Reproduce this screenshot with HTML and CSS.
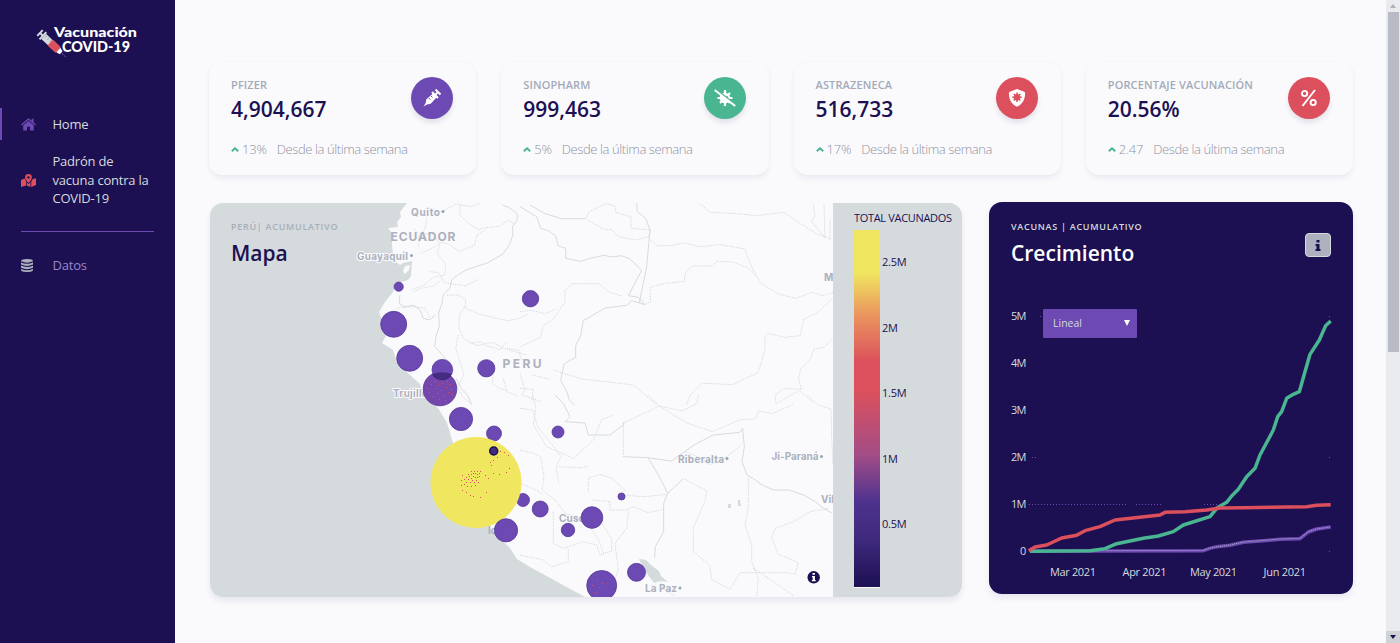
FILE: index.html
```html
<!DOCTYPE html>
<html lang="es">
<head>
<meta charset="utf-8">
<title>Vacunación COVID-19</title>
<link rel="stylesheet" href="styles.css">
</head>
<body>
<div class="app">
  <aside class="sidebar">
    <svg class="logo" width="104" height="42" viewBox="35 20 104 42">
      <g transform="translate(40 33) rotate(43)">
        <path d="M0-4v8M0 0h5M4-5v10" stroke="#d5dbdc" stroke-width="2" fill="none"/>
        <rect x="5" y="-3.500" width="10" height="7" fill="#d5dbdc"/>
        <path d="M7-3v3M10-3v3M13-3v3" stroke="#adb0bd"/>
        <rect x="14" y="-4" width="11" height="8" rx="1" fill="#db505c"/>
        <path d="M25-3l4 1v4l-4 1z" fill="#fafafd"/>
        <path d="M30 0h6" stroke="#6d49b3" stroke-dasharray="2 1"/>
      </g>
      <text x="54" y="36.500" textLength="83" lengthAdjust="spacingAndGlyphs">Vacunación</text>
      <text class="logo-big" x="62" y="51.500" textLength="68" lengthAdjust="spacingAndGlyphs">COVID-19</text>
    </svg>
    <nav class="nav">
      <a class="nav-item active">
        <svg width="15" height="13" viewBox="0 0 15 13"><path d="M0 6.400L7 .4h1l2.700 2.300V.8h1.800v3.500L15 6.400l-.8 1L7.500 1.900.8 7.400zM2.200 7.200L7.500 2.900l5.300 4.300v5.400H9V8.700H6v3.900H2.200z" fill="#6d49b3"/></svg>
        <span>Home</span>
      </a>
      <a class="nav-item tall">
        <svg width="15" height="13" viewBox="0 0 15 13"><path d="M7.500 0a3.400 3.400 0 0 1 3.400 3.400C10.900 5.300 8.500 7.600 7.500 9 6.500 7.600 4.100 5.300 4.100 3.400A3.400 3.400 0 0 1 7.500 0zM0 6l3.600-1.500L5 7v4.500L0 13zM5.700 8l1.800 2.200L9.500 8v5l-3.800-1.500zM10.300 7.500l1.500-2.600L15 4.200V11l-4.700 2z" fill="#db505c"/><circle cx="7.500" cy="3.400" r="1.200" fill="#1c1052"/></svg>
        <span>Padrón de vacuna contra la COVID-19</span>
      </a>
      <hr>
      <a class="nav-item data">
        <svg width="15" height="13" viewBox="0 0 15 13"><path d="M0 2C0 .7 2.700 0 6 0s6 .7 6 2v9c0 1.300-2.700 2-6 2s-6-.7-6-2z" fill="#adb0bd"/><path d="M0 2.800q6 3 12 0M0 6q6 3 12 0M0 9.300q6 3 12 0" fill="none" stroke="#1c1052" stroke-width="1.100"/></svg>
        <span>Datos</span>
      </a>
    </nav>
  </aside>

  <main class="main">
    <section class="stats">
      <article class="stat">
        <div class="stat-head">
          <div><h5>PFIZER</h5><strong>4,904,667</strong></div>
          <div class="badge purple"><svg width="18" height="18" viewBox="0 0 18 18"><path d="M12.500.5l5 5M15 3l-2.200 2.200M9 3l6 6" stroke="#fff" stroke-width="2" fill="none"/><path d="M10 4.500L3.200 10.500 2.600 14.200.4 17.600 4 15.400l3.700-.6 6-6.600z" fill="#fff"/><path d="M8 7l1.500 1.500M5.800 9l1.500 1.500" stroke="#6d49b3"/></svg></div>
        </div>
        <p><svg width="8" height="5" viewBox="0 0 8 5"><path d="M.8 4.200L4 1.300l3.200 2.900" fill="none" stroke="#4ab591" stroke-width="2"/></svg><span>13%</span><em>Desde la última semana</em></p>
      </article>
      <article class="stat">
        <div class="stat-head">
          <div><h5>SINOPHARM</h5><strong>999,463</strong></div>
          <div class="badge green"><svg width="22" height="18" viewBox="0 0 22 18"><g stroke="#fff" stroke-width="2.200"><path d="M11 1v16M3.500 9h15M6 4l10 10M16 4L6 14"/></g><circle cx="11" cy="9" r="5.300" fill="#fff"/><circle cx="13" cy="8" r=".9" fill="#4ab591"/><path d="M1.300 0l20.500 16" stroke="#4ab591" stroke-width="2"/><path d="M.7 1l20.500 16" stroke="#fff" stroke-width="2"/></svg></div>
        </div>
        <p><svg width="8" height="5" viewBox="0 0 8 5"><path d="M.8 4.200L4 1.300l3.200 2.900" fill="none" stroke="#4ab591" stroke-width="2"/></svg><span>5%</span><em>Desde la última semana</em></p>
      </article>
      <article class="stat">
        <div class="stat-head">
          <div><h5>ASTRAZENECA</h5><strong>516,733</strong></div>
          <div class="badge red"><svg width="18" height="18" viewBox="0 0 18 18"><path d="M9 0l7.200 2.700q1 .4.900 1.500C17 10.500 14.500 15.300 9 17.700 3.500 15.300 1 10.500.9 4.200q0-1.100.9-1.500z" fill="#fff"/><path d="M9 3.500v9.500M4.300 8.200h9.400M5.700 5l6.600 6.500M12.300 5l-6.600 6.500" stroke="#db505c" stroke-width="1.500"/><circle cx="9" cy="8.200" r="3.200" fill="#db505c"/></svg></div>
        </div>
        <p><svg width="8" height="5" viewBox="0 0 8 5"><path d="M.8 4.200L4 1.300l3.200 2.900" fill="none" stroke="#4ab591" stroke-width="2"/></svg><span>17%</span><em>Desde la última semana</em></p>
      </article>
      <article class="stat">
        <div class="stat-head">
          <div><h5>PORCENTAJE VACUNACIÓN</h5><strong>20.56%</strong></div>
          <div class="badge red"><svg width="18" height="18" viewBox="0 0 18 18"><path d="M15 1L2.500 17" stroke="#fff" stroke-width="2"/><circle cx="4.600" cy="4.500" r="2.600" fill="none" stroke="#fff" stroke-width="1.900"/><circle cx="13.200" cy="13.500" r="2.600" fill="none" stroke="#fff" stroke-width="1.900"/></svg></div>
        </div>
        <p><svg width="8" height="5" viewBox="0 0 8 5"><path d="M.8 4.200L4 1.300l3.200 2.900" fill="none" stroke="#4ab591" stroke-width="2"/></svg><span>2.47</span><em>Desde la última semana</em></p>
      </article>
    </section>

    <section class="panels">
      <article class="map-card">
        <svg class="map" width="623" height="394" viewBox="210 203 623 394">
          <path d="M210 203H407L400 212 401 217 397 222 398 227 388 228 392 233 392 246 394 260 400 265 403 263 412 261 411 276 408 280 397 283 393 292 385 302 379 312 381 318 387 325 386 336 382 343 393 350 397 362 410 375 420 384 423 395 438 408 447 423 453 443 470 490 490 528 500 538 510 548 517 559 530 567 563 585 585 597H210z" fill="#d5dbdc"/>
          <path d="M405 266l5-1-1 5-4 4-2-3z" fill="#fafafd"/>
          <path d="M639 559l7 1 5 5 8 6 2 5 7 6-8-1-6 2-9-12z" fill="#d5dbdc"/>
          <path d="M728 504h3v4h-3zM738 500h2l1 6h-3z" fill="#d5dbdc"/>
          <g class="roads" transform="translate(200 195) scale(.33333)">
            <path class="line" d="M908 30l20 8 25 20-3 20-12 15v28l-8 25-20 30-48 28-62 20-25 15-20 15-5 25-20 20-4 25-10 30 2 40-10 30-4 30 18 20 30 35 10 20M600 300l-3 25 15 10 30-4 18 14 10 25 20 5 15-15M768 550l16 30 18 20 14 30"/>
            <path d="M640 40l30 15 20-15 30 12 50-25 40 8 30-10M700 40l-20 25-4 35-20 25v30M780 30v30l25 25 30 18 25-5 40-5 25-18 20 15M640 100l20 18 35-2 25 30-8 30 25 30-3 35-35 6-30 25-35 12M660 175l35-14 30-20 25 8 28 20 45-18 8-30 22-15M690 230l25 3 20 30 30 5 30 5 40-20M640 290l30-12 30-5 25-18M590 340l45-5 40 5 15 28M740 300h35l22 14-2 25 40 18 50 12 40 8 30-6 30-14M795 335l-15 20-4 42 15 35 40 20 45-10 40 20 65 18M775 420l-8 40 15 45 10 35-20 35 15 30 25 20M810 445l32-5 18 12 40 12 18-22M880 540l-4 25 22 15 25 8M920 460l35 5 10 30M910 550l10 40 30 12"/>
          </g>
          <g class="roads" transform="translate(520 195) scale(.33333)">
            <path class="line" d="M0 35l50 30 12 35 25 8 20 15 8 30 22 7v30l45 9 25-8 45-10 25 5 28-4 25 10 35 34-40 76 30 5 20 22-40-12-15 14-65 8-20 12-45 26-8 45-15 30v35l-35 20-10 50 18 32 8 25 15 16M350 25l2 25 25 20 13 35-10 110-22 108M30 30l45 26 50 15h70"/>
            <path d="M198 70l10-20 50-25 27 8 3 20 45 12v35l58 5-5 20-40 10-50-10-20-20-28-4-48-28M392 135l20 18 48-2 30-8 50 12 60-6 75 13 15 42 14 30 18 30 50 32 55 14 50-18 30 10 35-10M378 327l14-8-2-42 45-12 58-6 4-28 22-18h60l10-14 50 2 40 15 30 25M541 28l30 24 80 4 60 6 80-10 60 40 40 25 40 13M880 30l5 30-10 20 40 48-3-100M930 75v60M937 310l-45 44-40 18-12 50-45 5-50-12-10 10v35l-10 40-12 35-35 14-40 20-90-4-38 35-10 30M937 432l-25 25-30 5-10 30-30 30-7 30 10 30-55-1-25 20 3 25 70-40 45 40M100 525l85 27 55 6 100 12 45 38 25 22M305 303l-38-12-30-25-80 0-22 20v35l-15 22-20 30-30 18-8 35-62 30M0 350l35-4 40 10 35-15M0 535l15 50-10 15 60 20M38 540l50 12M0 580l40 3-5 35"/>
          </g>
          <g class="roads" transform="translate(520 395) scale(.33333)">
            <path class="line" d="M105 0l25 25 20 40-15 15 60 4 10 36h65l40-30 3-10M310 185l70 3 75 10 20-15 50-35 55-28 80-8 8-12 5 55-7 45 15 40 25 15 20 15 35 15h45l45 15 35 20 25 20 25 14M385 190l30 50 28 55 48-45M443 295l-12 30v85l-25 45-2 35"/>
            <path d="M310 85v100M308 85l110-52 35 22 50 30 75 25 80-35 50-4 8-23 40 8 65-28M383 0l35 33 70 15 42-23 5-25M863 0l30 30 40 12 2 85 4 80M495 170l50 20 25 20 50-25 45-35M495 253l65 35-5 30-35 80v70l50 45 5 40 55 30 30-50h145l20 5 10-35-60-25-20-50 10-28 55-20 50-30 55-10M685 250v90l-10 50 20 60v50l20 50-5 60M205 290v-40l35-12 35 12 40 35-15 15 75 5 68-7M215 315l55 5v25h50l20-10 45 18 45-10M0 165l40 10 22 10 10 60-6 40 40 30 30 40 60 20 40 60 15 40M0 40l38 5 15 50 40 50 30 40-15 30 8 50M38 0l10 40-8 50 40 65 80 35 60-55 25-60 35-15M115 215l70 3 20-5M0 265l50 20 20 15M325 350l-5 50-35 45 10 80-20 50 6 28M100 350v95l30 15 60-20 40 10 10 30 35-12v-35l-30-50M0 480l70 15 25 20 50-15v-40M390 520l50 70 25 12M700 520l60 40 60 42"/>
          </g>
          <g class="labels">
            <text x="411" y="215.500" textLength="29" class="halo">Quito</text>
            <text x="390.500" y="241" textLength="65" class="country">ECUADOR</text>
            <text x="357" y="260" textLength="51" class="halo">Guayaquil</text>
            <text x="393" y="397" textLength="35" class="halo">Trujillo</text>
            <text x="502.500" y="367.500" textLength="39" class="country">PERU</text>
            <text x="559" y="522" textLength="32">Cusco</text>
            <text x="488" y="534">Ica</text>
            <text x="678" y="462.500" textLength="46">Riberalta</text>
            <text x="771.500" y="460" textLength="47">Ji-Paraná</text>
            <text x="645" y="592" textLength="32">La Paz</text>
            <text x="824" y="281">M</text>
            <text x="821" y="503">Vil</text>
          </g>
          <g fill="#8fa9ab"><circle cx="443" cy="211.500" r="1.500"/><circle cx="411.500" cy="255.500" r="1.500"/><circle cx="727" cy="458.500" r="1.500"/><circle cx="821.500" cy="456.500" r="1.500"/><circle cx="680" cy="588" r="1.500"/></g>
          <g class="bubbles">
            <circle cx="398.700" cy="286.700" r="4.600"/><circle cx="393.700" cy="324.300" r="13"/><circle cx="409.700" cy="358.300" r="13"/><circle cx="440" cy="389" r="16.800" class="big"/><circle cx="442.300" cy="369.700" r="10.300"/><circle cx="486.300" cy="368.300" r="8.600"/><circle cx="530.500" cy="298.700" r="8.200"/><circle cx="461" cy="419" r="11.600"/><circle cx="494" cy="433.500" r="7.500"/><circle cx="523" cy="500" r="6.500"/>
            <circle cx="476" cy="482.500" r="45.500" class="lima"/>
            <circle cx="493.700" cy="451" r="4" class="dark"/><circle cx="506" cy="530.300" r="11.600"/><circle cx="540.200" cy="509" r="8"/><circle cx="592" cy="517.500" r="10.800"/><circle cx="568" cy="530" r="6.700"/><circle cx="621.500" cy="496.500" r="3.500"/><circle cx="558" cy="432" r="6"/><circle cx="601.700" cy="585.500" r="15"/><circle cx="636.500" cy="572.300" r="9"/>
          </g>
          <path d="M432 374.200q10-4 20 0-3 5.800-10 5.800t-10-5.800z" fill="#1c1052" opacity=".5"/>
          <g fill="#db505c"><path d="M471 471h1v1h-1zM474 471h1v1h-1zM477 471h1v1h-1zM480 471h1v1h-1zM468 474h1v1h-1zM471 474h1v1h-1zM473 473h1v1h-1zM475 473h1v1h-1zM477 474h1v1h-1zM479 473h1v1h-1zM466 477h1v1h-1zM469 476h1v1h-1zM471 478h1v1h-1zM473 476h1v1h-1zM475 477h1v1h-1zM477 477h1v1h-1zM479 476h1v1h-1zM462 475h1v1h-1zM461 480h1v1h-1zM464 479h1v1h-1zM466 482h1v1h-1zM468 479h1v1h-1zM470 482h1v1h-1zM472 480h1v1h-1zM474 482h1v1h-1zM476 480h1v1h-1zM478 482h1v1h-1zM461 485h1v1h-1zM464 484h1v1h-1zM467 486h1v1h-1zM471 486h1v1h-1zM475 485h1v1h-1zM462 490h1v1h-1zM466 492h1v1h-1zM470 495h1v1h-1zM473 496h1v1h-1zM480 497h1v1h-1zM486 492h1v1h-1zM488 478h1v1h-1zM485 475h1v1h-1zM491 465h1v1h-1zM493 473h1v1h-1zM499 474h1v1h-1zM506 472h1v1h-1zM509 468h1v1h-1zM508 455h1v1h-1zM504 452h1v1h-1zM500 451h1v1h-1zM497 457h1v1h-1zM493 460h1v1h-1zM490 462h1v1h-1z"/><path d="M431 384h1v1h-1zM427 388h1v1h-1zM429 392h1v1h-1zM435 381h1v1h-1zM435 388h1v1h-1zM438 385h1v1h-1zM442 383h1v1h-1zM447 381h1v1h-1zM450 384h1v1h-1zM446 387h1v1h-1zM451 389h1v1h-1zM441 390h1v1h-1zM437 393h1v1h-1zM443 395h1v1h-1zM448 392h1v1h-1zM452 394h1v1h-1zM439 399h1v1h-1zM433 396h1v1h-1zM445 400h1v1h-1zM597 580h1v1h-1zM592 585h1v1h-1zM599 587h1v1h-1zM596 592h1v1h-1zM602 583h1v1h-1z"/></g>
          <circle cx="813.700" cy="577.300" r="6.200" fill="#1c1052"/>
          <path d="M812.500 573h2.400v1.800h-2.400zM812 576h2.900v4h.8v1.200h-3.900V580h.9v-2.800h-.7z" fill="#fff"/>
        </svg>
        <div class="legend">
          <h6>TOTAL VACUNADOS</h6>
          <div class="scale">
            <div class="ramp"></div>
            <ul><li>2.5M</li><li>2M</li><li>1.5M</li><li>1M</li><li>0.5M</li></ul>
          </div>
        </div>
        <header class="map-title"><h6>PERÚ| ACUMULATIVO</h6><h2>Mapa</h2></header>
      </article>

      <article class="growth">
        <header class="growth-head">
          <div><h6>VACUNAS | ACUMULATIVO</h6><h2>Crecimiento</h2></div>
          <button class="info"><svg width="6" height="11" viewBox="0 0 6 11"><path d="M1.500 0h3v2.500h-3zM.5 4h4v5h1v2h-5V9h1V6h-1z" fill="#1c1052"/></svg></button>
        </header>
        <div class="chart-wrap">
          <svg class="chart" width="364" height="294" viewBox="989 300 364 294">
            <g class="axis">
              <text x="1011" y="320" textLength="15.500">5M</text><text x="1011" y="367" textLength="15.500">4M</text><text x="1011" y="414" textLength="15.500">3M</text><text x="1011" y="461" textLength="15.500">2M</text><text x="1011" y="508" textLength="15.500">1M</text><text x="1020" y="555">0</text>
              <text x="1050" y="576" textLength="46">Mar 2021</text><text x="1122.500" y="576" textLength="44">Apr 2021</text><text x="1190" y="576" textLength="47">May 2021</text><text x="1263.500" y="576" textLength="42.500">Jun 2021</text>
            </g>
            <path d="M1029 504.500H1128M1136 504.500H1162M1204 504.500h14M1032 457.500h5M1329 457.500h1M1040 316.500h4M1329 316.500h1M1329 551.500h1" stroke="#6d49b3" stroke-dasharray="1 2"/>
            <g transform="translate(980 395) scale(.33333)" fill="none" stroke-width="10.500" stroke-linejoin="round">
              <path d="M150 469L330 468 670 467 690 460 710 455 750 451 790 442 850 437 900 433 960 431 985 411 1010 402 1052 396" stroke="#6d49b3"/>
              <path d="M380 467L670 466 690 459 750 450 790 441 850 436 900 432 960 430 985 410 1010 402 1052 396" stroke="#adb0bd" stroke-width="3" stroke-dasharray="3 3"/>
              <path d="M150 469L330 467 375 461 410 446 490 430 535 423 580 410 610 390 690 365 712 338 740 322 755 303 775 283 800 245 825 220 840 180 880 105 893 65 905 50 920 10 940-2 958-10 975-70 990-122 1018-165 1037-208 1052-222" stroke="#4ab591"/>
              <path d="M146 467L165 456 200 450 245 429 290 421 315 407 360 395 405 375 540 360 555 352 615 350 680 345 720 339 790 338 980 335 1010 331 1052 329" stroke="#db505c"/>
            </g>
          </svg>
          <div class="select"><span>Lineal</span><i></i></div>
        </div>
      </article>
    </section>
  </main>
  <div class="scrollbar"><div class="arrow"></div><div class="thumb"></div><div class="track"></div><div class="arrow down"></div></div>
</div>
</body>
</html>
```
FILE: styles.css
```css
* { box-sizing: border-box; margin: 0; padding: 0; }
body { background: #fafafd; font-family: "Open Sans", "Noto Sans", sans-serif; color: #1c1052; overflow: hidden; }
svg { display: block; flex: none; }
.app { display: flex; height: 643px; width: 1400px; }

.sidebar { width: 175px; background: #1c1052; padding-top: 20px; flex: none; }
.logo { margin-left: 35px; }
.logo text { font-family: Lato, sans-serif; font-weight: 900; font-size: 14px; fill: #fff; }
.logo .logo-big { font-size: 15px; }
.nav { display: flex; flex-direction: column; padding-top: 46px; }
.nav-item { display: flex; align-items: center; height: 32px; padding-left: 21px; gap: 16.500px; font-size: 13px; line-height: 18.500px; letter-spacing: -.22px; color: #d5dbdc; }
.nav-item.active { border-left: 2px solid #6d49b3; padding-left: 19px; }
.nav-item.tall { height: 56px; margin-top: 12px; }
.nav-item span { width: 104px; }
.nav hr { border: 0; height: 1px; background: #6d49b3; margin: 23px 21px 17px; }
.nav-item.data { color: #9c86cd; }

.main { width: 1211px; padding: 62px 33px 0 34px; flex: none; }
.stats { display: grid; grid-template-columns: repeat(4, 1fr); gap: 25px; }
.stat { height: 113px; padding: 14px 23px 0 22px; border-radius: 13px; box-shadow: 0 4px 5px #1c10520e, 0 0 2px #1c10520c; background: #fafafd; }
.stat-head { display: flex; justify-content: space-between; height: 64px; }
.stat h5 { font-size: 11px; line-height: 18px; font-weight: 600; letter-spacing: .12px; color: #a3aab7; white-space: nowrap; }
.stat strong { display: block; font-size: 21px; line-height: 31px; font-weight: 600; }
.badge { width: 42px; height: 42px; margin-top: 1px; border-radius: 50%; display: flex; align-items: center; justify-content: center; box-shadow: 0 4px 5px #1c10521a; }
.purple { background: #6d49b3; }
.green { background: #4ab591; }
.red { background: #db505c; }
.stat p { display: flex; align-items: center; font-size: 13px; line-height: 18px; font-weight: 300; letter-spacing: -.4px; color: #8f93a2; white-space: nowrap; }
.stat p span { margin-left: 3px; letter-spacing: -.2px; }
.stat em { font-style: normal; margin-left: 10px; }

.panels { display: flex; align-items: flex-start; gap: 27px; padding: 27px 0 0 1px; }
.map-card { position: relative; display: flex; width: 752px; height: 394px; margin-top: 1px; border-radius: 13px; overflow: hidden; box-shadow: 0 4px 6px #1c105214; flex: none; }
.map { background: #fafafd; }
.roads path { fill: none; stroke: #d5dbdc; stroke-width: 3; stroke-dasharray: 4 3; }
.roads .line { stroke-dasharray: none; }
.labels text { font: 700 10px Inter, sans-serif; fill: #adb0bd; }
.labels .country { font-size: 12px; }
.labels .halo { paint-order: stroke; stroke: #fafafd; stroke-width: 2px; }
.bubbles circle { fill: #6d49b3; stroke: #563799; stroke-width: .8; }
.bubbles .big { fill: #7547ac; }
.bubbles .lima { fill: #f0e660; stroke: none; }
.bubbles .dark { fill: #402c85; stroke: #1c1052; stroke-width: 1.500; }
.map-title { position: absolute; left: 21px; top: 15px; }
h6 { font-size: 9px; line-height: 17px; font-weight: 600; letter-spacing: .72px; color: #a7aebb; }
h2 { font-size: 21px; line-height: 36px; font-weight: 600; }
.legend { width: 129px; background: #d5dbdc; padding: 7px 0 0 21px; }
.legend h6 { font-size: 11px; line-height: 16px; font-weight: 400; letter-spacing: -.32px; color: #1c1052; white-space: nowrap; }
.scale { display: flex; gap: 2px; padding-top: 4px; }
.ramp { width: 26px; height: 358px; border-bottom: 1px solid #fafafd; background: linear-gradient(#f0e660 12%, #eb9a5f 23%, #db505c 37%, #db505c 45%, #a34d87 63%, #4e328e 76%, #3e297c 87%, #1c1052); }
.scale ul { list-style: none; padding-top: 24px; }
.scale li { height: 65.600px; font-size: 11px; line-height: 16px; letter-spacing: -.2px; }

.growth { width: 364px; height: 392px; border-radius: 13px; background: #1c1052; color: #fff; box-shadow: 0 4px 6px #1c105214; overflow: hidden; flex: none; }
.growth-head { display: flex; justify-content: space-between; height: 98px; padding: 16px 22px 0; }
.growth h6 { color: #d5dbdc; }
.info { width: 26px; height: 24px; margin-top: 15px; border: 1px solid #d5dbdc; border-radius: 4px; background: #adb0bd; display: flex; align-items: center; justify-content: center; }
.chart-wrap { position: relative; }
.axis text { font-size: 11px; fill: #d5dbdc; }
.select { position: absolute; left: 54px; top: 9px; width: 94px; height: 29px; padding: 0 7px 2px 10px; display: flex; align-items: center; justify-content: space-between; background: #6d49b3; border-radius: 1px; font-size: 10.500px; color: #d5dbdc; }
.select i { border: 3px solid transparent; border-top: 6px solid #fafafd; border-bottom: 0; }

.scrollbar { width: 14px; flex: none; display: flex; flex-direction: column; background: #e9ebee; }
.arrow { height: 12px; background: #e9ebee; display: flex; align-items: center; justify-content: center; }
.arrow::after { content: ""; border: 3px solid transparent; border-bottom: 4px solid #adb0bd; border-top: 0; }
.arrow.down { background: #cfd3d8; }
.arrow.down::after { border-bottom: 0; border-top: 4px solid #1c1052; }
.thumb { height: 340px; margin: 0 1px 0 2px; background: #b8bbc6; }
.track { flex: 1; }
```
